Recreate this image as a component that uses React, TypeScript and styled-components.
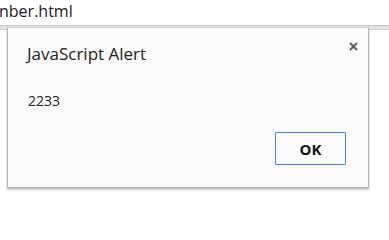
import styled, { createGlobalStyle } from "styled-components";

const GlobalStyle = createGlobalStyle`
	html, body {
		margin: 0;
		padding: 0;
		background: #fff;
		overflow: hidden;
	}
	body {
		font-family: "Open Sans", "Noto Sans", sans-serif;
	}
`;

export default function App() {
	return (
		<>
			<GlobalStyle />
			<Page>
				<AddressBar>
					<Url>nber.html</Url>
				</AddressBar>
				<Toolbar />
				<Dialog role="alertdialog">
					<DialogHeader>
						<Title>JavaScript Alert</Title>
						<CloseButton aria-label="Close">
							<svg width="9" height="9" viewBox="0 0 9 9">
								<path d="M1 1 L8 8 M8 1 L1 8" stroke="#5a5a5a" strokeWidth="1.8" />
							</svg>
						</CloseButton>
					</DialogHeader>
					<Message>2233</Message>
					<Footer>
						<OkButton>OK</OkButton>
					</Footer>
				</Dialog>
			</Page>
		</>
	);
}

const Page = styled.div`
	position: relative;
	width: 389px;
	height: 214px;
	background: #fff;
`;

const AddressBar = styled.div`
	height: 25px;
	display: flex;
	align-items: center;
	border-bottom: 1px solid #c4c4c4;
	background: #fff;
`;

const Url = styled.span`
	font-size: 16px;
	color: #1a1a1a;
	margin-top: -3px;
	margin-left: -1px;
`;

const Toolbar = styled.div`
	height: 3px;
	background: #e2e2e2;
	border-bottom: 1px solid #d2d2d2;
`;

const Dialog = styled.div`
	position: absolute;
	left: 7px;
	top: 27px;
	width: 360px;
	height: 159px;
	display: flex;
	flex-direction: column;
	background: #fafafa;
	border: 1px solid #b4b4b4;
	border-top-color: #d0d0d0;
	box-shadow: 0 2px 2px rgba(0, 0, 0, 0.25);
`;

const DialogHeader = styled.div`
	display: flex;
	justify-content: space-between;
	align-items: flex-start;
	padding: 14px 10px 0 19px;
	height: 38px;
	box-sizing: border-box;
`;

const Title = styled.h1`
	margin: 0;
	font-size: 17px;
	font-weight: 400;
	color: #222;
	line-height: 24px;
`;

const CloseButton = styled.button`
	border: 0;
	background: none;
	padding: 0;
	width: 9px;
	height: 9px;
	display: flex;
	cursor: pointer;
`;

const Message = styled.p`
	margin: 25px 0 0 20px;
	font-size: 14px;
	color: #222;
	line-height: 20px;
`;

const Footer = styled.div`
	margin-top: auto;
	display: flex;
	justify-content: flex-end;
	padding: 0 22px 22px 0;
`;

const OkButton = styled.button`
	width: 71px;
	height: 33px;
	border: 1px solid #4d7cd0;
	border-radius: 1px;
	background: #fbfbfb;
	font-family: "Open Sans", "Noto Sans", sans-serif;
	font-weight: 700;
	font-size: 15px;
	color: #111;
	cursor: pointer;
`;
